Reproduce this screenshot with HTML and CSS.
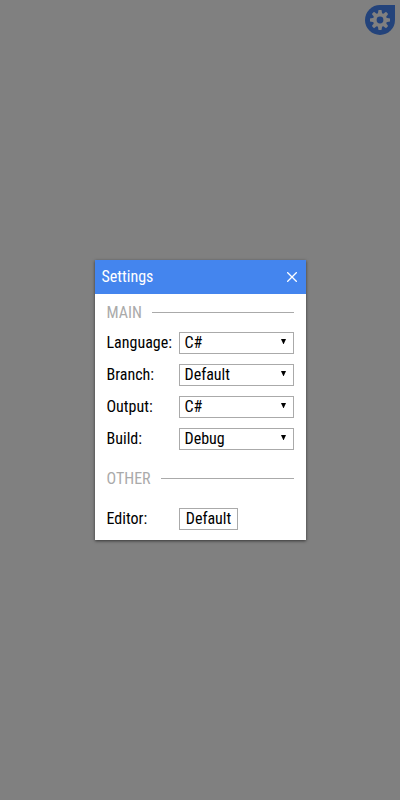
FILE: index.html
```html
<!DOCTYPE html>
<html lang="en">
<head>
<meta charset="utf-8">
<title>Settings</title>
<link rel="stylesheet" href="styles.css">
</head>
<body>
<button class="gear" aria-label="Settings">
<svg width="20" height="20" viewBox="0 0 20 20"><g fill="#808080"><circle cx="10" cy="10" r="7"/><path id="t" d="M8.5 0h3l.7 4v12l-.7 4h-3l-.7-4V4z"/><use href="#t" transform="rotate(45 10 10)"/><use href="#t" transform="rotate(90 10 10)"/><use href="#t" transform="rotate(135 10 10)"/></g><circle cx="10" cy="10" r="3.4" fill="#23437b"/></svg>
</button>
<main class="dialog">
<header class="title"><span>Settings</span><svg width="10" height="10" viewBox="0 0 10 10"><path d="M.2.2l9.6 9.6M9.8.2L.2 9.8" stroke="#fff" stroke-width="1.3"/></svg></header>
<div class="body">
<h2 class="section">MAIN</h2>
<div class="row"><span class="label">Language:</span><div class="select"><span>C#</span><i class="arrow"></i></div></div>
<div class="row"><span class="label">Branch:</span><div class="select"><span>Default</span><i class="arrow"></i></div></div>
<div class="row"><span class="label">Output:</span><div class="select"><span>C#</span><i class="arrow"></i></div></div>
<div class="row"><span class="label">Build:</span><div class="select"><span>Debug</span><i class="arrow"></i></div></div>
<h2 class="section other">OTHER</h2>
<div class="row"><span class="label">Editor:</span><button class="button">Default</button></div>
</div>
</main>
</body>
</html>
```
FILE: styles.css
```css
* { box-sizing: border-box; }
body { margin: 0; height: 100vh; background: #808080; display: flex; align-items: center; justify-content: center; font: 16px/20px "Roboto Condensed", Roboto, sans-serif; color: #000; }
.gear { position: absolute; top: 5px; right: 5px; width: 30px; height: 30px; border: 0; border-radius: 15px 0 15px 15px; background: #23437b; padding: 5px; }
.gear svg { display: block; }
.dialog { width: 211px; height: 280px; background: #fff; box-shadow: 0 1px 3px rgba(0,0,0,.6); }
.title { height: 34px; padding: 0 9px 0 7px; background: #4485ee; color: #fff; display: flex; align-items: center; justify-content: space-between; }
.body { padding: 8px 12px 0; }
.section { margin: 0 0 8px; font: inherit; line-height: 22px; color: #aaa; display: flex; align-items: center; gap: 10px; }
.section::after { content: ""; flex: 1; height: 1px; margin-bottom: 1px; background: #aaa; }
.other { margin: 18px 0 18px; }
.row { display: flex; height: 22px; margin-bottom: 10px; line-height: 22px; }
.label { width: 72px; }
.select { flex: 1; border: 1px solid #aaa; display: flex; justify-content: space-between; padding: 0 6.5px 0 5px; line-height: 20px; }
.arrow { width: 5px; height: 5px; margin-top: 6px; background: #000; clip-path: polygon(0 0, 100% 0, 55% 100%, 45% 100%); }
.button { width: 59px; border: 1px solid #aaa; padding: 0 0 0 1px; background: #fff; font: inherit; line-height: 20px; color: #000; }
```
